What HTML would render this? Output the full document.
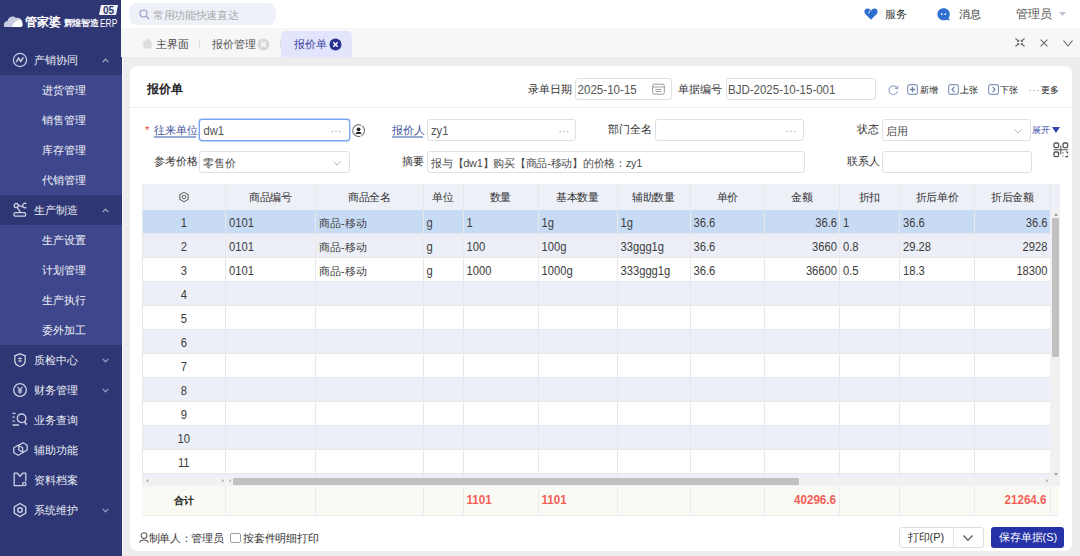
<!DOCTYPE html>
<html><head><meta charset="utf-8"><style>
*{margin:0;padding:0;box-sizing:border-box}
html,body{width:1080px;height:556px;overflow:hidden;background:#eeecec;font-family:"Liberation Sans",sans-serif;color:#333}
.b{position:absolute}
.t{position:absolute;line-height:12px;white-space:nowrap;font-weight:500}
.inp{position:absolute;height:22px;border:1px solid #e0e0e0;border-radius:3px;background:#fff}
</style></head><body>
<div class="b" style="left:0px;top:0px;width:121.5px;height:556px;background:#2e3674;"></div>
<div class="b" style="left:0px;top:75px;width:121.5px;height:120px;background:#3e468c;"></div>
<div class="b" style="left:0px;top:225px;width:121.5px;height:120px;background:#3e468c;"></div>
<svg class="b" style="left:0px;top:0px" width="121" height="40" viewBox="0 0 121 40">
<path d="M5 27 C3 27 3.5 21 7.5 21 C8 17 13 15 16 18 C19 17 22.5 19.5 22 23 C23 24 23 27 21 27 Z" fill="#c9cce0"/>
<path d="M12 27 C14 22 17 19 21 20 C23 22 23 26 21 27 Z" fill="#ffffff"/>
<path d="M101 5 L118 5 L116 15 L99 15 Z" fill="#f2f3f8"/>
<text x="103" y="14" font-size="10" font-weight="bold" fill="#2e3674" font-family="Liberation Sans" transform="skewX(0)">05</text></svg>
<div class="t" style="left:25px;top:14.5px;font-size:12.3px;color:#fff;font-weight:bold;line-height:14px;letter-spacing:0.1px">管家婆</div>
<div class="t" style="left:63.5px;top:17.5px;font-size:9px;color:#fff;font-weight:bold;line-height:10px;letter-spacing:-0.2px">辉煌智造</div>
<div class="t" style="left:99.5px;top:17.5px;font-size:10.5px;color:#fff;font-weight:400;line-height:11px;transform:scaleX(0.8);transform-origin:left">ERP</div>
<svg class="b" style="left:12px;top:52.2px" width="17" height="16" viewBox="0 0 17 16"><circle cx="8" cy="8" r="6.6" fill="none" stroke="#cdd0e3" stroke-width="1.2"/><path d="M4.3 10.2 L6.6 6.2 L8.8 9.4 L11.4 5.4" fill="none" stroke="#cdd0e3" stroke-width="1.5"/></svg>
<div class="t" style="left:34px;top:53.5px;font-size:10.6px;color:#eceef6;">产销协同</div>
<svg class="b" style="left:101.5px;top:58.0px" width="7" height="5" viewBox="0 0 7 5"><path d="M0.7 4.1 L3.5 1.1 L6.3 4.1" fill="none" stroke="#a5a9c4" stroke-width="1.3"/></svg>
<div class="t" style="left:42px;top:84.0px;font-size:11px;color:#f2f3f9;">进货管理</div>
<div class="t" style="left:42px;top:114.0px;font-size:11px;color:#f2f3f9;">销售管理</div>
<div class="t" style="left:42px;top:144.0px;font-size:11px;color:#f2f3f9;">库存管理</div>
<div class="t" style="left:42px;top:174.0px;font-size:11px;color:#f2f3f9;">代销管理</div>
<svg class="b" style="left:12px;top:202.2px" width="17" height="16" viewBox="0 0 17 16"><g fill="none" stroke="#cdd0e3" stroke-width="1.3"><circle cx="4.2" cy="3.6" r="2.1"/><rect x="2" y="10.6" width="11.6" height="3.6" rx="1.3"/><path d="M5.2 5.4 L8.6 10.6 M6.2 3.3 L10.3 4.6"/><path d="M14.3 1.6 C12.3 0.6 10.4 2.2 10.6 3.8 C10.8 5.6 12.8 6.4 14.3 5.4"/></g></svg>
<div class="t" style="left:34px;top:203.5px;font-size:10.6px;color:#eceef6;">生产制造</div>
<svg class="b" style="left:101.5px;top:208.0px" width="7" height="5" viewBox="0 0 7 5"><path d="M0.7 4.1 L3.5 1.1 L6.3 4.1" fill="none" stroke="#a5a9c4" stroke-width="1.3"/></svg>
<div class="t" style="left:42px;top:234.0px;font-size:11px;color:#f2f3f9;">生产设置</div>
<div class="t" style="left:42px;top:264.0px;font-size:11px;color:#f2f3f9;">计划管理</div>
<div class="t" style="left:42px;top:294.0px;font-size:11px;color:#f2f3f9;">生产执行</div>
<div class="t" style="left:42px;top:324.0px;font-size:11px;color:#f2f3f9;">委外加工</div>
<svg class="b" style="left:12px;top:352.2px" width="17" height="16" viewBox="0 0 17 16"><path d="M8 1.8 L13.2 3.8 L13.2 8.8 C13.2 11.8 10.3 13.8 8 14.5 C5.7 13.8 2.8 11.8 2.8 8.8 L2.8 3.8 Z" fill="none" stroke="#cdd0e3" stroke-width="1.3"/><path d="M6 6.5 L10 6.5 M8 5 L8 10.5 M6 9 L10 9" stroke="#cdd0e3" stroke-width="0.9"/></svg>
<div class="t" style="left:34px;top:353.5px;font-size:10.6px;color:#eceef6;">质检中心</div>
<svg class="b" style="left:101.5px;top:358.0px" width="7" height="5" viewBox="0 0 7 5"><path d="M0.7 0.9 L3.5 3.9 L6.3 0.9" fill="none" stroke="#979cc0" stroke-width="1.3"/></svg>
<svg class="b" style="left:12px;top:382.2px" width="17" height="16" viewBox="0 0 17 16"><circle cx="8" cy="8" r="6.3" fill="none" stroke="#cdd0e3" stroke-width="1.3"/><path d="M5.5 4.8 L8 7.8 L10.5 4.8 M8 7.8 L8 11.8 M5.8 8.3 L10.2 8.3 M5.8 10 L10.2 10" fill="none" stroke="#cdd0e3" stroke-width="1.1"/></svg>
<div class="t" style="left:34px;top:383.5px;font-size:10.6px;color:#eceef6;">财务管理</div>
<svg class="b" style="left:101.5px;top:388.0px" width="7" height="5" viewBox="0 0 7 5"><path d="M0.7 0.9 L3.5 3.9 L6.3 0.9" fill="none" stroke="#979cc0" stroke-width="1.3"/></svg>
<svg class="b" style="left:12px;top:412.2px" width="17" height="16" viewBox="0 0 17 16"><g fill="none" stroke="#cdd0e3" stroke-width="1.3"><path d="M0.5 1.3 L3.6 1.3 M0.5 5.2 L2.8 5.2 M0.5 9.1 L2.8 9.1 M0.5 13 L7 13"/><circle cx="9.6" cy="6.3" r="4.3" stroke-width="1.4"/><path d="M12.5 9.5 L14.6 12.8" stroke-width="1.6"/></g></svg>
<div class="t" style="left:34px;top:413.5px;font-size:10.6px;color:#eceef6;">业务查询</div>
<svg class="b" style="left:12px;top:442.2px" width="17" height="16" viewBox="0 0 17 16"><g fill="none" stroke="#cdd0e3" stroke-width="1.3" stroke-linejoin="round"><path d="M6.2 3.2 L10.6 5.7 L10.6 10.7 L6.2 13.2 L1.8 10.7 L1.8 5.7 Z"/><path d="M11 0.8 L15.2 3.2 L15.2 8 L11 10.4 L6.8 8 L6.8 3.2 Z"/></g></svg>
<div class="t" style="left:34px;top:443.5px;font-size:10.6px;color:#eceef6;">辅助功能</div>
<svg class="b" style="left:12px;top:472.2px" width="17" height="16" viewBox="0 0 17 16"><g fill="none" stroke="#cdd0e3" stroke-width="1.3" stroke-linejoin="round"><path d="M10.5 13.6 L2.2 13.6 L2.2 1.2 L5.3 1.2 L8 4.3 L10.7 1.2 L13.8 1.2 L13.8 9.3"/><circle cx="12.3" cy="12" r="1.7"/></g></svg>
<div class="t" style="left:34px;top:473.5px;font-size:10.6px;color:#eceef6;">资料档案</div>
<svg class="b" style="left:12px;top:502.2px" width="17" height="16" viewBox="0 0 17 16"><path d="M8 1.5 L13.7 4.8 L13.7 11.2 L8 14.5 L2.3 11.2 L2.3 4.8 Z" fill="none" stroke="#cdd0e3" stroke-width="1.4"/><circle cx="8" cy="8" r="2.3" fill="none" stroke="#cdd0e3" stroke-width="1.4"/></svg>
<div class="t" style="left:34px;top:503.5px;font-size:10.6px;color:#eceef6;">系统维护</div>
<svg class="b" style="left:101.5px;top:508.0px" width="7" height="5" viewBox="0 0 7 5"><path d="M0.7 0.9 L3.5 3.9 L6.3 0.9" fill="none" stroke="#979cc0" stroke-width="1.3"/></svg>
<div class="b" style="left:121px;top:0px;width:959px;height:28px;background:#fff;"></div>
<div class="b" style="left:129px;top:3px;width:147px;height:22px;background:#eef1f8;border-radius:8px"></div>
<svg class="b" style="left:139px;top:9px" width="11" height="11" viewBox="0 0 11 11"><circle cx="4.5" cy="4.5" r="3.5" fill="none" stroke="#97a5cc" stroke-width="1.2"/><path d="M7.1 7.1 L10 10" stroke="#97a5cc" stroke-width="1.4"/></svg>
<div class="t" style="left:153px;top:9px;font-size:11px;color:#aaaaaa;letter-spacing:-0.35px">常用功能快速直达</div>
<svg class="b" style="left:864px;top:8px" width="14" height="12" viewBox="0 0 14 12"><path d="M7 11.8 L1.3 6 C-0.3 4.3 0.3 1 3 0.6 C4.8 0.3 6 1.3 7 2.5 C8 1.3 9.2 0.3 11 0.6 C13.7 1 14.3 4.3 12.7 6 Z" fill="#2f6fd0"/><path d="M6.2 2.2 L4.5 5.5" stroke="#fff" stroke-width="0.8"/></svg>
<div class="t" style="left:884.5px;top:8px;font-size:11px;color:#333;">服务</div>
<svg class="b" style="left:937px;top:7.8px" width="14" height="14" viewBox="0 0 14 14"><path d="M6.6 0.3 C10.2 0.3 12.8 2.9 12.8 6.2 C12.8 7.6 12.4 8.9 11.6 9.9 L12.6 12.6 L9.6 11.7 C8.7 12.1 7.7 12.3 6.6 12.3 C3 12.3 0.4 9.6 0.4 6.3 C0.4 2.9 3 0.3 6.6 0.3 Z" fill="#2f6fd0"/><rect x="4" y="5.4" width="1.5" height="1.6" fill="#fff"/><rect x="7.6" y="5.4" width="1.5" height="1.6" fill="#fff"/></svg>
<div class="t" style="left:958.5px;top:8px;font-size:11px;color:#333;">消息</div>
<div class="t" style="left:1015.5px;top:7.3px;font-size:11.8px;color:#555;line-height:14px">管理员</div>
<svg class="b" style="left:1058.7px;top:11.6px" width="7" height="4" viewBox="0 0 7 4"><path d="M0 0 L7 0 L3.5 4 Z" fill="#c0c4d0"/></svg>
<div class="b" style="left:121px;top:28px;width:959px;height:29px;background:#f7f7f7;"></div>
<svg class="b" style="left:141.5px;top:38.3px" width="11" height="11" viewBox="0 0 11 11"><path d="M5.5 0.2 L11 5.3 L9.6 5.3 L9.6 10.6 L1.4 10.6 L1.4 5.3 L0 5.3 Z" fill="#dcdcdc"/></svg>
<div class="t" style="left:156px;top:37.6px;font-size:10.7px;color:#444;">主界面</div>
<div class="b" style="left:199px;top:40px;width:1px;height:8px;background:#dddddd;"></div>
<div class="t" style="left:212px;top:37.6px;font-size:10.7px;color:#555;">报价管理</div>
<svg class="b" style="left:257px;top:38px" width="13" height="13" viewBox="0 0 13 13"><circle cx="6.5" cy="6.5" r="6" fill="#d8d8d8"/><path d="M4.3 4.3 L8.7 8.7 M8.7 4.3 L4.3 8.7" stroke="#fff" stroke-width="1.3"/></svg>
<div class="b" style="left:280px;top:40px;width:1px;height:8px;background:#dddddd;"></div>
<div class="b" style="left:281px;top:31px;width:71px;height:26px;background:#e2e5fb;border-radius:5px 5px 0 0"></div>
<div class="t" style="left:294px;top:37.6px;font-size:10.7px;color:#3a3f9e;">报价单</div>
<svg class="b" style="left:329px;top:38px" width="13" height="13" viewBox="0 0 13 13"><circle cx="6.5" cy="6.5" r="6" fill="#27308f"/><path d="M4.3 4.3 L8.7 8.7 M8.7 4.3 L4.3 8.7" stroke="#fff" stroke-width="1.5"/></svg>
<svg class="b" style="left:1015px;top:38px" width="10" height="9" viewBox="0 0 10 9"><path d="M0.5 0.5 L3.5 3.2 M9.5 0.5 L6.5 3.2 M0.5 8.5 L3.5 5.8 M9.5 8.5 L6.5 5.8" stroke="#666" stroke-width="1.1"/><path d="M3.8 1.8 L3.8 3.5 L2 3.5 M6.2 1.8 L6.2 3.5 L8 3.5 M3.8 7.2 L3.8 5.5 L2 5.5 M6.2 7.2 L6.2 5.5 L8 5.5" stroke="#666" stroke-width="0.9" fill="none"/></svg>
<svg class="b" style="left:1040px;top:38.5px" width="8" height="8" viewBox="0 0 8 8"><path d="M0.6 0.6 L7.4 7.4 M7.4 0.6 L0.6 7.4" stroke="#666" stroke-width="1.1"/></svg>
<svg class="b" style="left:1063px;top:39.5px" width="10" height="7" viewBox="0 0 10 7"><path d="M0.5 0.5 L5 6 L9.5 0.5" stroke="#666" stroke-width="1.1" fill="none"/></svg>
<div class="b" style="left:122px;top:57px;width:958px;height:499px;background:#eeecec;"></div>
<div class="b" style="left:121.5px;top:57px;width:1px;height:499px;background:#f8f7f7;"></div>
<div class="b" style="left:129.5px;top:65.5px;width:942.5px;height:485.5px;background:#fff;border-radius:7px"></div>
<div class="t" style="left:147px;top:82px;font-size:11.8px;color:#222;font-weight:bold;line-height:15px">报价单</div>
<div class="b" style="left:130px;top:107px;width:942px;height:1px;background:#f0f0f0;"></div>
<div class="t" style="left:528px;top:82.5px;font-size:10.6px;color:#333;">录单日期</div>
<div class="inp" style="left:575px;top:78px;width:97px;"></div>
<div class="t" style="left:577.5px;top:83.5px;font-size:11.6px;color:#555;transform:scaleY(1.12);transform-origin:0 10.5px">2025-10-15</div>
<svg class="b" style="left:652px;top:83px" width="13" height="12" viewBox="0 0 13 12"><rect x="0.7" y="1.2" width="11.6" height="10" rx="1.5" fill="none" stroke="#999" stroke-width="1"/><path d="M0.7 4 L12.3 4 M3.5 6.5 L9.5 6.5 M3.5 8.5 L9.5 8.5" stroke="#999" stroke-width="0.9"/></svg>
<div class="t" style="left:678px;top:82.5px;font-size:10.6px;color:#333;">单据编号</div>
<div class="inp" style="left:726px;top:78px;width:150px;"></div>
<div class="t" style="left:728px;top:83.5px;font-size:11.5px;color:#555;transform:scaleY(1.12);transform-origin:0 10.5px">BJD-2025-10-15-001</div>
<svg class="b" style="left:887.5px;top:84.8px" width="11" height="10" viewBox="0 0 11 10"><path d="M9.1 3.3 A4.3 4.3 0 1 0 9.4 6.4" fill="none" stroke="#98a9c8" stroke-width="1.1"/><path d="M9.9 0.9 L9.6 3.9 L6.7 3.3" fill="none" stroke="#98a9c8" stroke-width="1.1"/></svg>
<svg class="b" style="left:906.5px;top:84.2px" width="11" height="11" viewBox="0 0 11 11"><rect x="0.6" y="0.6" width="9.8" height="9.8" rx="2.2" fill="none" stroke="#8799bf" stroke-width="1.15"/><path d="M5.5 2.8 L5.5 8.2 M2.8 5.5 L8.2 5.5" stroke="#7081aa" stroke-width="1.3"/></svg>
<div class="t" style="left:920px;top:84.5px;font-size:9.2px;color:#222;line-height:11px">新增</div>
<svg class="b" style="left:947.5px;top:84.2px" width="11" height="11" viewBox="0 0 11 11"><rect x="0.6" y="0.6" width="9.8" height="9.8" rx="2.2" fill="none" stroke="#8799bf" stroke-width="1.15"/><path d="M6.5 2.8 L4 5.5 L6.5 8.2" fill="none" stroke="#7081aa" stroke-width="1.2"/></svg>
<div class="t" style="left:960px;top:84.5px;font-size:9.2px;color:#222;line-height:11px">上张</div>
<svg class="b" style="left:987.5px;top:84.2px" width="11" height="11" viewBox="0 0 11 11"><rect x="0.6" y="0.6" width="9.8" height="9.8" rx="2.2" fill="none" stroke="#8799bf" stroke-width="1.15"/><path d="M4.5 2.8 L7 5.5 L4.5 8.2" fill="none" stroke="#7081aa" stroke-width="1.2"/></svg>
<div class="t" style="left:1000px;top:84.5px;font-size:9.2px;color:#222;line-height:11px">下张</div>
<svg class="b" style="left:1029px;top:89px" width="10" height="3" viewBox="0 0 10 3"><circle cx="1.2" cy="1.5" r="0.75" fill="#aaa"/><circle cx="5" cy="1.5" r="0.75" fill="#aaa"/><circle cx="8.8" cy="1.5" r="0.75" fill="#aaa"/></svg>
<div class="t" style="left:1041px;top:84.5px;font-size:9.2px;color:#222;line-height:11px">更多</div>
<div class="t" style="left:145px;top:123.5px;font-size:11.5px;color:#f04848;">*</div>
<div class="t" style="left:154px;top:124.3px;font-size:10.6px;color:#41519a;">往来单位</div>
<div class="b" style="left:154px;top:136.4px;width:41.5px;height:1.6px;background:#97abd5;"></div>
<div class="inp" style="left:199px;top:118.9px;width:150.5px;border-color:#7aa6f0;box-shadow:0 0 0 0.4px #7aa6f0"></div>
<div class="t" style="left:203.5px;top:125px;font-size:11.2px;color:#555;transform:scaleY(1.1);transform-origin:0 10.5px">dw1</div>
<svg class="b" style="left:331px;top:129.5px" width="10" height="3" viewBox="0 0 10 3"><circle cx="1.2" cy="1.5" r="0.75" fill="#aaa"/><circle cx="5" cy="1.5" r="0.75" fill="#aaa"/><circle cx="8.8" cy="1.5" r="0.75" fill="#aaa"/></svg>
<svg class="b" style="left:352px;top:123.6px" width="13" height="13" viewBox="0 0 13 13"><circle cx="6.6" cy="6.6" r="5.9" fill="none" stroke="#666" stroke-width="1" stroke-dasharray="11.2 1.15" transform="rotate(186 6.6 6.6)"/><circle cx="6.6" cy="5.3" r="1.9" fill="#222"/><path d="M3.7 9.9 C3.7 6.9 9.5 6.9 9.5 9.9 Z" fill="#222"/></svg>
<div class="t" style="left:391.5px;top:124.3px;font-size:10.6px;color:#41519a;">报价人</div>
<div class="b" style="left:391.5px;top:136.4px;width:31.5px;height:1.6px;background:#97abd5;"></div>
<div class="inp" style="left:427px;top:119.2px;width:149px;"></div>
<div class="t" style="left:431px;top:125px;font-size:11.2px;color:#555;transform:scaleY(1.1);transform-origin:0 10.5px">zy1</div>
<svg class="b" style="left:559px;top:129.5px" width="10" height="3" viewBox="0 0 10 3"><circle cx="1.2" cy="1.5" r="0.75" fill="#aaa"/><circle cx="5" cy="1.5" r="0.75" fill="#aaa"/><circle cx="8.8" cy="1.5" r="0.75" fill="#aaa"/></svg>
<div class="t" style="left:608px;top:123.3px;font-size:10.6px;color:#333;">部门全名</div>
<div class="inp" style="left:654.5px;top:119.2px;width:149.5px;"></div>
<svg class="b" style="left:786px;top:129.5px" width="10" height="3" viewBox="0 0 10 3"><circle cx="1.2" cy="1.5" r="0.75" fill="#aaa"/><circle cx="5" cy="1.5" r="0.75" fill="#aaa"/><circle cx="8.8" cy="1.5" r="0.75" fill="#aaa"/></svg>
<div class="t" style="left:857px;top:123.3px;font-size:10.6px;color:#333;">状态</div>
<div class="inp" style="left:881.5px;top:119.2px;width:149.5px;"></div>
<div class="t" style="left:885.5px;top:125px;font-size:11px;color:#4c4c4c;">启用</div>
<svg class="b" style="left:1014px;top:129px" width="8" height="5" viewBox="0 0 8 5"><path d="M0.5 0.5 L4 4 L7.5 0.5" fill="none" stroke="#aaa" stroke-width="0.9"/></svg>
<div class="t" style="left:1032px;top:124.5px;font-size:9.2px;color:#3949ab;line-height:11px">展开</div>
<svg class="b" style="left:1052px;top:126.5px" width="8.5" height="6" viewBox="0 0 8.5 6"><path d="M0 0 L8 0 L4 6 Z" fill="#3344aa"/></svg>
<svg class="b" style="left:1052.5px;top:141.8px" width="16" height="16" viewBox="0 0 16 16"><g fill="none" stroke="#555" stroke-width="1.3"><rect x="1" y="1" width="4.6" height="4.6" rx="1.3"/><rect x="10" y="1" width="4.6" height="4.6" rx="1.3"/><rect x="1" y="10" width="4.6" height="4.6" rx="1.3"/><path d="M0.6 7.8 L15 7.8 M7.8 3.8 L7.8 12.2" stroke-width="1.1"/><path d="M10 10.2 L10 11.5 M12.8 10 L14.6 10 L14.6 11.6 M10 14.6 L10 13.6 M12.2 14.6 L14.6 14.6 L14.6 13.4" stroke-width="1.1"/></g></svg>
<div class="t" style="left:154px;top:154.8px;font-size:10.6px;color:#333;">参考价格</div>
<div class="inp" style="left:199px;top:151px;width:150.5px;"></div>
<div class="t" style="left:203px;top:156.5px;font-size:11px;color:#4c4c4c;">零售价</div>
<svg class="b" style="left:333px;top:160.5px" width="8" height="5" viewBox="0 0 8 5"><path d="M0.5 0.5 L4 4 L7.5 0.5" fill="none" stroke="#aaa" stroke-width="0.9"/></svg>
<div class="t" style="left:402px;top:154.8px;font-size:10.6px;color:#333;">摘要</div>
<div class="inp" style="left:427px;top:151px;width:377.5px;"></div>
<div class="t" style="left:431px;top:156.5px;font-size:11px;color:#4c4c4c;letter-spacing:-0.25px">报与【dw1】购买【商品-移动】的价格：zy1</div>
<div class="t" style="left:846.5px;top:154.8px;font-size:10.6px;color:#333;">联系人</div>
<div class="inp" style="left:882px;top:151px;width:150px;"></div>
<div class="b" style="left:142px;top:184px;width:918px;height:26px;background:#eef0f8;"></div>
<div class="b" style="left:142px;top:184px;width:918px;height:1px;background:#efeff1;"></div>
<div class="b" style="left:142px;top:210px;width:908px;height:24px;background:#c8dbf5;"></div>
<div class="b" style="left:142px;top:233px;width:908px;height:1px;background:#e8e8ec;"></div>
<div class="b" style="left:142px;top:234px;width:908px;height:24px;background:#eceff7;"></div>
<div class="b" style="left:142px;top:257px;width:908px;height:1px;background:#e8e8ec;"></div>
<div class="b" style="left:142px;top:258px;width:908px;height:24px;background:#ffffff;"></div>
<div class="b" style="left:142px;top:281px;width:908px;height:1px;background:#e8e8ec;"></div>
<div class="b" style="left:142px;top:282px;width:908px;height:24px;background:#eceff7;"></div>
<div class="b" style="left:142px;top:305px;width:908px;height:1px;background:#e8e8ec;"></div>
<div class="b" style="left:142px;top:306px;width:908px;height:24px;background:#ffffff;"></div>
<div class="b" style="left:142px;top:329px;width:908px;height:1px;background:#e8e8ec;"></div>
<div class="b" style="left:142px;top:330px;width:908px;height:24px;background:#eceff7;"></div>
<div class="b" style="left:142px;top:353px;width:908px;height:1px;background:#e8e8ec;"></div>
<div class="b" style="left:142px;top:354px;width:908px;height:24px;background:#ffffff;"></div>
<div class="b" style="left:142px;top:377px;width:908px;height:1px;background:#e8e8ec;"></div>
<div class="b" style="left:142px;top:378px;width:908px;height:24px;background:#eceff7;"></div>
<div class="b" style="left:142px;top:401px;width:908px;height:1px;background:#e8e8ec;"></div>
<div class="b" style="left:142px;top:402px;width:908px;height:24px;background:#ffffff;"></div>
<div class="b" style="left:142px;top:425px;width:908px;height:1px;background:#e8e8ec;"></div>
<div class="b" style="left:142px;top:426px;width:908px;height:24px;background:#eceff7;"></div>
<div class="b" style="left:142px;top:449px;width:908px;height:1px;background:#e8e8ec;"></div>
<div class="b" style="left:142px;top:450px;width:908px;height:24px;background:#ffffff;"></div>
<div class="b" style="left:142px;top:473px;width:908px;height:1px;background:#e8e8ec;"></div>
<div class="b" style="left:142px;top:474px;width:908px;height:3px;background:#eceff7;"></div>
<div class="b" style="left:142px;top:184px;width:1px;height:332px;background:#e8e8ea;"></div>
<div class="b" style="left:225.0px;top:184px;width:1px;height:292.5px;background:#e8e8eb;"></div>
<div class="b" style="left:315.0px;top:184px;width:1px;height:292.5px;background:#e8e8eb;"></div>
<div class="b" style="left:422.5px;top:184px;width:1px;height:292.5px;background:#e8e8eb;"></div>
<div class="b" style="left:462.5px;top:184px;width:1px;height:292.5px;background:#e8e8eb;"></div>
<div class="b" style="left:537.5px;top:184px;width:1px;height:292.5px;background:#e8e8eb;"></div>
<div class="b" style="left:616.5px;top:184px;width:1px;height:292.5px;background:#e8e8eb;"></div>
<div class="b" style="left:689.5px;top:184px;width:1px;height:292.5px;background:#e8e8eb;"></div>
<div class="b" style="left:764.0px;top:184px;width:1px;height:292.5px;background:#e8e8eb;"></div>
<div class="b" style="left:839.0px;top:184px;width:1px;height:292.5px;background:#e8e8eb;"></div>
<div class="b" style="left:899.0px;top:184px;width:1px;height:292.5px;background:#e8e8eb;"></div>
<div class="b" style="left:974.0px;top:184px;width:1px;height:292.5px;background:#e8e8eb;"></div>
<div class="b" style="left:1049.5px;top:184px;width:1px;height:292.5px;background:#e8e8eb;"></div>
<div class="t" style="left:210.5px;top:191px;font-size:11px;color:#333;width:120px;text-align:center;letter-spacing:-0.4px">商品编号</div>
<div class="t" style="left:309.25px;top:191px;font-size:11px;color:#333;width:120px;text-align:center;letter-spacing:-0.4px">商品全名</div>
<div class="t" style="left:383.0px;top:191px;font-size:11px;color:#333;width:120px;text-align:center;letter-spacing:-0.4px">单位</div>
<div class="t" style="left:440.5px;top:191px;font-size:11px;color:#333;width:120px;text-align:center;letter-spacing:-0.4px">数量</div>
<div class="t" style="left:517.5px;top:191px;font-size:11px;color:#333;width:120px;text-align:center;letter-spacing:-0.4px">基本数量</div>
<div class="t" style="left:593.5px;top:191px;font-size:11px;color:#333;width:120px;text-align:center;letter-spacing:-0.4px">辅助数量</div>
<div class="t" style="left:667.25px;top:191px;font-size:11px;color:#333;width:120px;text-align:center;letter-spacing:-0.4px">单价</div>
<div class="t" style="left:742.0px;top:191px;font-size:11px;color:#333;width:120px;text-align:center;letter-spacing:-0.4px">金额</div>
<div class="t" style="left:809.5px;top:191px;font-size:11px;color:#333;width:120px;text-align:center;letter-spacing:-0.4px">折扣</div>
<div class="t" style="left:877.0px;top:191px;font-size:11px;color:#333;width:120px;text-align:center;letter-spacing:-0.4px">折后单价</div>
<div class="t" style="left:952.25px;top:191px;font-size:11px;color:#333;width:120px;text-align:center;letter-spacing:-0.4px">折后金额</div>
<svg class="b" style="left:177.7px;top:191.3px" width="12" height="12" viewBox="0 0 12 12"><path d="M6.00 1.00 L8.00 2.54 L10.33 3.50 L10.00 6.00 L10.33 8.50 L8.00 9.46 L6.00 11.00 L4.00 9.46 L1.67 8.50 L2.00 6.00 L1.67 3.50 L4.00 2.54 Z" fill="none" stroke="#5a5a5a" stroke-width="1" stroke-linejoin="round"/><circle cx="6" cy="6" r="1.8" fill="none" stroke="#5a5a5a" stroke-width="0.9"/></svg>
<div class="t" style="left:153.75px;top:217px;font-size:11.2px;color:#3c3c3c;width:60px;text-align:center;transform:scaleY(1.14);transform-origin:0 10.5px;">1</div>
<div class="t" style="left:229.0px;top:217px;font-size:11.2px;color:#3c3c3c;transform:scaleY(1.14);transform-origin:0 10.5px;">0101</div>
<div class="t" style="left:319.0px;top:217px;font-size:10.6px;color:#3c3c3c;">商品-移动</div>
<div class="t" style="left:426.5px;top:217px;font-size:11.2px;color:#3c3c3c;transform:scaleY(1.14);transform-origin:0 10.5px;">g</div>
<div class="t" style="left:466.5px;top:217px;font-size:11.2px;color:#3c3c3c;transform:scaleY(1.14);transform-origin:0 10.5px;">1</div>
<div class="t" style="left:541.5px;top:217px;font-size:11.2px;color:#3c3c3c;transform:scaleY(1.14);transform-origin:0 10.5px;">1g</div>
<div class="t" style="left:620.5px;top:217px;font-size:11.2px;color:#3c3c3c;transform:scaleY(1.14);transform-origin:0 10.5px;">1g</div>
<div class="t" style="left:693.5px;top:217px;font-size:11.2px;color:#3c3c3c;transform:scaleY(1.14);transform-origin:0 10.5px;">36.6</div>
<div class="t" style="left:764.5px;top:217px;font-size:11.2px;color:#3c3c3c;width:72.5px;text-align:right;transform:scaleY(1.14);transform-origin:0 10.5px;">36.6</div>
<div class="t" style="left:843.0px;top:217px;font-size:11.2px;color:#3c3c3c;transform:scaleY(1.14);transform-origin:0 10.5px;">1</div>
<div class="t" style="left:903.0px;top:217px;font-size:11.2px;color:#3c3c3c;transform:scaleY(1.14);transform-origin:0 10.5px;">36.6</div>
<div class="t" style="left:974.5px;top:217px;font-size:11.2px;color:#3c3c3c;width:73.0px;text-align:right;transform:scaleY(1.14);transform-origin:0 10.5px;">36.6</div>
<div class="t" style="left:153.75px;top:241px;font-size:11.2px;color:#3c3c3c;width:60px;text-align:center;transform:scaleY(1.14);transform-origin:0 10.5px;">2</div>
<div class="t" style="left:229.0px;top:241px;font-size:11.2px;color:#3c3c3c;transform:scaleY(1.14);transform-origin:0 10.5px;">0101</div>
<div class="t" style="left:319.0px;top:241px;font-size:10.6px;color:#3c3c3c;">商品-移动</div>
<div class="t" style="left:426.5px;top:241px;font-size:11.2px;color:#3c3c3c;transform:scaleY(1.14);transform-origin:0 10.5px;">g</div>
<div class="t" style="left:466.5px;top:241px;font-size:11.2px;color:#3c3c3c;transform:scaleY(1.14);transform-origin:0 10.5px;">100</div>
<div class="t" style="left:541.5px;top:241px;font-size:11.2px;color:#3c3c3c;transform:scaleY(1.14);transform-origin:0 10.5px;">100g</div>
<div class="t" style="left:620.5px;top:241px;font-size:11.2px;color:#3c3c3c;transform:scaleY(1.14);transform-origin:0 10.5px;">33ggg1g</div>
<div class="t" style="left:693.5px;top:241px;font-size:11.2px;color:#3c3c3c;transform:scaleY(1.14);transform-origin:0 10.5px;">36.6</div>
<div class="t" style="left:764.5px;top:241px;font-size:11.2px;color:#3c3c3c;width:72.5px;text-align:right;transform:scaleY(1.14);transform-origin:0 10.5px;">3660</div>
<div class="t" style="left:843.0px;top:241px;font-size:11.2px;color:#3c3c3c;transform:scaleY(1.14);transform-origin:0 10.5px;">0.8</div>
<div class="t" style="left:903.0px;top:241px;font-size:11.2px;color:#3c3c3c;transform:scaleY(1.14);transform-origin:0 10.5px;">29.28</div>
<div class="t" style="left:974.5px;top:241px;font-size:11.2px;color:#3c3c3c;width:73.0px;text-align:right;transform:scaleY(1.14);transform-origin:0 10.5px;">2928</div>
<div class="t" style="left:153.75px;top:265px;font-size:11.2px;color:#3c3c3c;width:60px;text-align:center;transform:scaleY(1.14);transform-origin:0 10.5px;">3</div>
<div class="t" style="left:229.0px;top:265px;font-size:11.2px;color:#3c3c3c;transform:scaleY(1.14);transform-origin:0 10.5px;">0101</div>
<div class="t" style="left:319.0px;top:265px;font-size:10.6px;color:#3c3c3c;">商品-移动</div>
<div class="t" style="left:426.5px;top:265px;font-size:11.2px;color:#3c3c3c;transform:scaleY(1.14);transform-origin:0 10.5px;">g</div>
<div class="t" style="left:466.5px;top:265px;font-size:11.2px;color:#3c3c3c;transform:scaleY(1.14);transform-origin:0 10.5px;">1000</div>
<div class="t" style="left:541.5px;top:265px;font-size:11.2px;color:#3c3c3c;transform:scaleY(1.14);transform-origin:0 10.5px;">1000g</div>
<div class="t" style="left:620.5px;top:265px;font-size:11.2px;color:#3c3c3c;transform:scaleY(1.14);transform-origin:0 10.5px;">333ggg1g</div>
<div class="t" style="left:693.5px;top:265px;font-size:11.2px;color:#3c3c3c;transform:scaleY(1.14);transform-origin:0 10.5px;">36.6</div>
<div class="t" style="left:764.5px;top:265px;font-size:11.2px;color:#3c3c3c;width:72.5px;text-align:right;transform:scaleY(1.14);transform-origin:0 10.5px;">36600</div>
<div class="t" style="left:843.0px;top:265px;font-size:11.2px;color:#3c3c3c;transform:scaleY(1.14);transform-origin:0 10.5px;">0.5</div>
<div class="t" style="left:903.0px;top:265px;font-size:11.2px;color:#3c3c3c;transform:scaleY(1.14);transform-origin:0 10.5px;">18.3</div>
<div class="t" style="left:974.5px;top:265px;font-size:11.2px;color:#3c3c3c;width:73.0px;text-align:right;transform:scaleY(1.14);transform-origin:0 10.5px;">18300</div>
<div class="t" style="left:153.75px;top:289px;font-size:11.2px;color:#3c3c3c;width:60px;text-align:center;transform:scaleY(1.14);transform-origin:0 10.5px;">4</div>
<div class="t" style="left:153.75px;top:313px;font-size:11.2px;color:#3c3c3c;width:60px;text-align:center;transform:scaleY(1.14);transform-origin:0 10.5px;">5</div>
<div class="t" style="left:153.75px;top:337px;font-size:11.2px;color:#3c3c3c;width:60px;text-align:center;transform:scaleY(1.14);transform-origin:0 10.5px;">6</div>
<div class="t" style="left:153.75px;top:361px;font-size:11.2px;color:#3c3c3c;width:60px;text-align:center;transform:scaleY(1.14);transform-origin:0 10.5px;">7</div>
<div class="t" style="left:153.75px;top:385px;font-size:11.2px;color:#3c3c3c;width:60px;text-align:center;transform:scaleY(1.14);transform-origin:0 10.5px;">8</div>
<div class="t" style="left:153.75px;top:409px;font-size:11.2px;color:#3c3c3c;width:60px;text-align:center;transform:scaleY(1.14);transform-origin:0 10.5px;">9</div>
<div class="t" style="left:153.75px;top:433px;font-size:11.2px;color:#3c3c3c;width:60px;text-align:center;transform:scaleY(1.14);transform-origin:0 10.5px;">10</div>
<div class="t" style="left:153.75px;top:457px;font-size:11.2px;color:#3c3c3c;width:60px;text-align:center;transform:scaleY(1.14);transform-origin:0 10.5px;">11</div>
<div class="b" style="left:142px;top:476.5px;width:918px;height:9px;background:#f1f1f1;"></div>
<div class="b" style="left:233px;top:477.5px;width:565.5px;height:7px;background:#c1c1c1;border-radius:1px"></div>
<svg class="b" style="left:146px;top:479.3px" width="2.5" height="3.5" viewBox="0 0 2.5 3.5"><path d="M2.5 0 L0 1.75 L2.5 3.5 Z" fill="#b0b0b0"/></svg>
<svg class="b" style="left:221.5px;top:479.3px" width="2.5" height="3.5" viewBox="0 0 2.5 3.5"><path d="M0 0 L2.5 1.75 L0 3.5 Z" fill="#b0b0b0"/></svg>
<svg class="b" style="left:228.5px;top:479.3px" width="2.5" height="3.5" viewBox="0 0 2.5 3.5"><path d="M2.5 0 L0 1.75 L2.5 3.5 Z" fill="#b0b0b0"/></svg>
<svg class="b" style="left:1046px;top:479.3px" width="2.5" height="3.5" viewBox="0 0 2.5 3.5"><path d="M0 0 L2.5 1.75 L0 3.5 Z" fill="#b0b0b0"/></svg>
<div class="b" style="left:1050px;top:210px;width:10px;height:275.5px;background:#f1f1f1;"></div>
<div class="b" style="left:1052px;top:218px;width:6.5px;height:139px;background:#c1c1c1;border-radius:1px"></div>
<svg class="b" style="left:1053.5px;top:212.5px" width="4" height="3" viewBox="0 0 4 3"><path d="M0 3 L2 0 L4 3 Z" fill="#a3a3a3"/></svg>
<svg class="b" style="left:1053.5px;top:473px" width="4" height="3" viewBox="0 0 4 3"><path d="M0 0 L2 3 L4 0 Z" fill="#a3a3a3"/></svg>
<div class="b" style="left:142px;top:485.5px;width:917px;height:30px;background:#fafaf4;border-bottom:1px solid #ececec"></div>
<div class="b" style="left:225.0px;top:485.5px;width:1px;height:30px;background:#ececec;"></div>
<div class="b" style="left:315.0px;top:485.5px;width:1px;height:30px;background:#ececec;"></div>
<div class="b" style="left:422.5px;top:485.5px;width:1px;height:30px;background:#ececec;"></div>
<div class="b" style="left:462.5px;top:485.5px;width:1px;height:30px;background:#ececec;"></div>
<div class="b" style="left:537.5px;top:485.5px;width:1px;height:30px;background:#ececec;"></div>
<div class="b" style="left:616.5px;top:485.5px;width:1px;height:30px;background:#ececec;"></div>
<div class="b" style="left:689.5px;top:485.5px;width:1px;height:30px;background:#ececec;"></div>
<div class="b" style="left:764.0px;top:485.5px;width:1px;height:30px;background:#ececec;"></div>
<div class="b" style="left:839.0px;top:485.5px;width:1px;height:30px;background:#ececec;"></div>
<div class="b" style="left:899.0px;top:485.5px;width:1px;height:30px;background:#ececec;"></div>
<div class="b" style="left:974.0px;top:485.5px;width:1px;height:30px;background:#ececec;"></div>
<div class="b" style="left:1049.5px;top:485.5px;width:1px;height:30px;background:#ececec;"></div>
<div class="t" style="left:153.75px;top:494px;font-size:10px;color:#222;width:60px;text-align:center;font-weight:bold;line-height:13px">合计</div>
<div class="t" style="left:466.5px;top:493px;font-size:11.6px;color:#f35e56;font-weight:bold;line-height:13px;transform:scaleY(1.1);transform-origin:0 11px">1101</div>
<div class="t" style="left:541.5px;top:493px;font-size:11.6px;color:#f35e56;font-weight:bold;line-height:13px;transform:scaleY(1.1);transform-origin:0 11px">1101</div>
<div class="t" style="left:764.5px;top:493px;font-size:11.6px;color:#f35e56;width:71.5px;text-align:right;font-weight:bold;line-height:13px;transform:scaleY(1.1);transform-origin:0 11px">40296.6</div>
<div class="t" style="left:974.5px;top:493px;font-size:11.6px;color:#f35e56;width:72.0px;text-align:right;font-weight:bold;line-height:13px;transform:scaleY(1.1);transform-origin:0 11px">21264.6</div>
<svg class="b" style="left:138.5px;top:532px" width="10" height="11" viewBox="0 0 10 11"><circle cx="5" cy="3.6" r="2.9" fill="none" stroke="#555" stroke-width="1.05"/><path d="M0.7 10.6 C1 7.2 9 7.2 9.3 10.6" fill="none" stroke="#555" stroke-width="1.05"/></svg>
<div class="t" style="left:148.5px;top:531.5px;font-size:11px;color:#333;letter-spacing:-0.3px">制单人：管理员</div>
<div class="b" style="left:230px;top:532.6px;width:10.6px;height:10.6px;background:#fff;border:1px solid #9c9c9c;border-radius:2px"></div>
<div class="t" style="left:243px;top:531.5px;font-size:11px;color:#333;letter-spacing:-0.2px">按套件明细打印</div>
<div class="b" style="left:899px;top:527px;width:85px;height:20.5px;background:#fff;border:1px solid #dedede;border-radius:3px"></div>
<div class="b" style="left:953px;top:527px;width:1px;height:20.5px;background:#e3e3e3;"></div>
<div class="t" style="left:907.5px;top:530.5px;font-size:11px;color:#333;">打印(P)</div>
<svg class="b" style="left:963px;top:534.5px" width="10" height="6" viewBox="0 0 10 6"><path d="M0.5 0.5 L5 5.3 L9.5 0.5" fill="none" stroke="#444" stroke-width="1.1"/></svg>
<div class="b" style="left:991px;top:526.5px;width:73px;height:21px;background:#2532a8;border-radius:3px"></div>
<div class="t" style="left:999px;top:530.5px;font-size:11px;color:#fff;letter-spacing:-0.1px">保存单据(S)</div>
</body></html>
